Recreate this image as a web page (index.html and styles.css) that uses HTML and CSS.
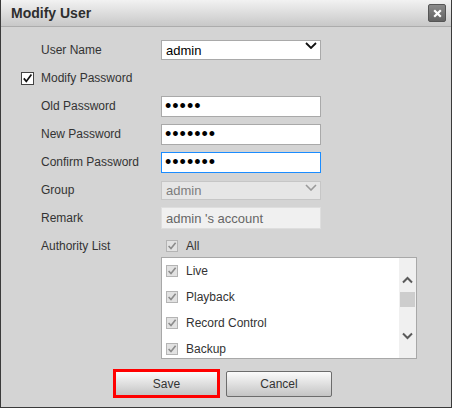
FILE: index.html
```html
<!DOCTYPE html>
<html>
<head>
    <link rel="stylesheet" href="styles.css">
</head>
<body>
    <div class="dialog">
        <div class="dialog-title">
            <b>Modify User</b>
            <button class="close-btn" title="Close">
                <svg width="9" height="9" viewBox="0 0 9 9"><path d="M1.2 1.2 L7.8 7.8 M7.8 1.2 L1.2 7.8" stroke="#fff" stroke-width="2.2" fill="none"/></svg>
            </button>
        </div>

        <div class="dialog-body">
            <div class="row">
                <span class="row-label">User Name</span>
                <div class="select-wrap">
                    <select class="field field-select">
                        <option>admin</option>
                    </select>
                    <svg class="chevron" width="12" height="7" viewBox="0 0 12 7"><path d="M1 1 L6 6 L11 1" fill="none" stroke="#111" stroke-width="1.8"/></svg>
                </div>
            </div>

            <div class="row">
                <span class="check">
                    <svg width="11" height="11" viewBox="0 0 11 11"><path d="M1.8 5.4 L4.3 8.4 L9.4 1.6" fill="none" stroke="#111" stroke-width="1.7"/></svg>
                </span>
                <span class="row-label">Modify Password</span>
            </div>

            <div class="row">
                <span class="row-label">Old Password</span>
                <input class="field field-pw" type="password" value="12345">
            </div>

            <div class="row">
                <span class="row-label">New Password</span>
                <input class="field field-pw" type="password" value="1234567">
            </div>

            <div class="row">
                <span class="row-label">Confirm Password</span>
                <input class="field field-pw field-active" id="confirm-password" type="password" value="1234567">
            </div>

            <div class="row">
                <span class="row-label">Group</span>
                <div class="select-wrap">
                    <select class="field field-select field-disabled" disabled>
                        <option>admin</option>
                    </select>
                    <svg class="chevron chevron-dim" width="12" height="7" viewBox="0 0 12 7"><path d="M1 1 L6 6 L11 1" fill="none" stroke="#9a9a9a" stroke-width="1.6"/></svg>
                </div>
            </div>

            <div class="row">
                <span class="row-label">Remark</span>
                <input class="field field-readonly" type="text" value="admin 's account" readonly>
            </div>

            <div class="row">
                <span class="row-label">Authority List</span>
                <div class="auth-item auth-all">
                    <span class="check check-dim">
                        <svg width="10" height="10" viewBox="0 0 10 10"><path d="M1.6 5 L4 7.6 L8.6 1.8" fill="none" stroke="#8c8c8c" stroke-width="1.6"/></svg>
                    </span>
                    All
                </div>
            </div>

            <div class="auth-list">
                <div class="auth-items">
                    <div class="auth-item">
                        <span class="check check-dim"><svg width="10" height="10" viewBox="0 0 10 10"><path d="M1.6 5 L4 7.6 L8.6 1.8" fill="none" stroke="#8c8c8c" stroke-width="1.6"/></svg></span>
                        Live
                    </div>
                    <div class="auth-item">
                        <span class="check check-dim"><svg width="10" height="10" viewBox="0 0 10 10"><path d="M1.6 5 L4 7.6 L8.6 1.8" fill="none" stroke="#8c8c8c" stroke-width="1.6"/></svg></span>
                        Playback
                    </div>
                    <div class="auth-item">
                        <span class="check check-dim"><svg width="10" height="10" viewBox="0 0 10 10"><path d="M1.6 5 L4 7.6 L8.6 1.8" fill="none" stroke="#8c8c8c" stroke-width="1.6"/></svg></span>
                        Record Control
                    </div>
                    <div class="auth-item">
                        <span class="check check-dim"><svg width="10" height="10" viewBox="0 0 10 10"><path d="M1.6 5 L4 7.6 L8.6 1.8" fill="none" stroke="#8c8c8c" stroke-width="1.6"/></svg></span>
                        Backup
                    </div>
                </div>
                <div class="auth-scroll">
                    <svg width="11" height="8" viewBox="0 0 11 8"><path d="M1 6.5 L5.5 2 L10 6.5" fill="none" stroke="#5a5a5a" stroke-width="2"/></svg>
                    <div class="scroll-thumb"></div>
                    <svg class="scroll-down" width="11" height="8" viewBox="0 0 11 8"><path d="M1 1.5 L5.5 6 L10 1.5" fill="none" stroke="#5a5a5a" stroke-width="2"/></svg>
                </div>
            </div>

            <div class="buttons">
                <button class="btn btn-save">Save</button>
                <button class="btn">Cancel</button>
            </div>
        </div>
    </div>

    <script>
        const confirmPw = document.getElementById("confirm-password");
        confirmPw.focus();
        confirmPw.setSelectionRange(confirmPw.value.length, confirmPw.value.length);
    </script>
</body>
</html>
```

FILE: styles.css
```css
/* Modify user dialog */
* {
    box-sizing: border-box;
}

body {
    margin: 0;
    font-family: "Liberation Sans", Arial, sans-serif;
    font-size: 12px;
    color: #333;
}

.dialog {
    width: 452px;
    height: 408px;
    background-color: #d4d4d4;
    border: 1px solid #3a3a3a;
    border-top: none;
}

.dialog-title {
    height: 27px;
    display: flex;
    align-items: center;
    justify-content: space-between;
    padding: 0 5px 0 10px;
    background: linear-gradient(#f2f2f2, #c8c8c8);
    border-bottom: 1px solid #acacac;
}

.dialog-title b {
    font-size: 14px;
    color: #2e2e2e;
}

.close-btn {
    width: 18px;
    height: 18px;
    padding: 0;
    display: flex;
    align-items: center;
    justify-content: center;
    background: linear-gradient(#8a8a8a, #636363);
    border: 1px solid #555;
    border-radius: 2px;
}

.dialog-body {
    padding-top: 9px;
}

.row {
    display: flex;
    align-items: center;
    height: 28px;
    padding-left: 40px;
}

.row-label {
    width: 120px;
}

/* form fields */
.field {
    width: 160px;
    height: 21px;
    margin: 0;
    padding: 0 4px;
    border: 1px solid #a9a9a9;
    border-radius: 0;
    background-color: #fff;
    font-family: "Liberation Sans", Arial, sans-serif;
    font-size: 13px;
    color: #000;
    outline: none;
}

.field-pw {
    font-size: 18px;
    letter-spacing: 1px;
    padding-left: 3px;
}

.field-active {
    border-color: #1a8cff;
}

.select-wrap {
    position: relative;
    display: flex;
}

.field-select {
    appearance: none;
    -webkit-appearance: none;
    height: 20px;
}

.field-disabled {
    height: 19px;
    background-color: #e6e6e6;
    border-color: #c6c6c6;
    color: #7d7d7d;
    opacity: 1;
}

.field-readonly {
    height: 22px;
    background-color: #f0f0f0;
    border-color: #dedede;
    color: #666;
}

.chevron {
    position: absolute;
    right: 4px;
    top: 2px;
    pointer-events: none;
}

.chevron-dim {
    top: 3px;
}

/* checkboxes */
.check {
    width: 13px;
    height: 13px;
    margin-left: -20px;
    margin-right: 7px;
    display: flex;
    align-items: center;
    justify-content: center;
    border: 1px solid #444;
    background-color: #fff;
}

.check-dim {
    width: 12px;
    height: 12px;
    margin: 0;
    border-color: #b4b4b4;
    background-color: #e2e2e2;
}

/* authority list */
.auth-item {
    display: flex;
    align-items: center;
    gap: 8px;
    height: 26px;
    padding-left: 4px;
}

.auth-all {
    padding-left: 5px;
}

.auth-list {
    display: flex;
    width: 256px;
    height: 102px;
    margin: -3px 0 0 160px;
    border: 1px solid #a8a8a8;
    background-color: #fff;
}

.auth-items {
    flex: 1;
    overflow: hidden;
}

.auth-scroll {
    width: 17px;
    display: flex;
    flex-direction: column;
    align-items: center;
    padding-top: 18px;
    background-color: #f0f0f0;
}

.scroll-thumb {
    width: 15px;
    height: 15px;
    margin-top: 8px;
    background-color: #cdcdcd;
}

.scroll-down {
    margin-top: 25px;
}

/* buttons */
.buttons {
    display: flex;
    align-items: center;
    gap: 6px;
    margin-top: 10px;
    padding-left: 112px;
}

.btn {
    width: 106px;
    height: 26px;
    padding: 0;
    border: 1px solid #6c6c6c;
    border-radius: 2px;
    background: linear-gradient(#fbfbfb, #c4c4c4);
    font-family: "Liberation Sans", Arial, sans-serif;
    font-size: 12px;
    color: #333;
}

.btn-save {
    width: 107px;
    height: 29px;
    border: 3px solid #f00;
    border-radius: 0;
}
```
